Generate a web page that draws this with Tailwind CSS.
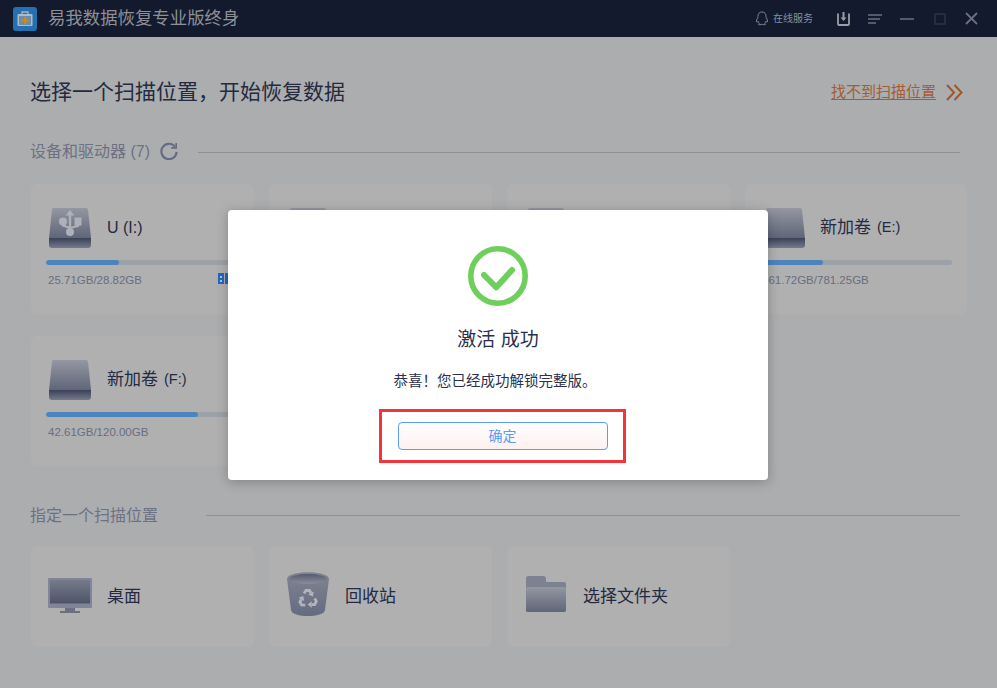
<!DOCTYPE html>
<html lang="zh-CN">
<head>
  <meta charset="UTF-8" />
  <meta name="viewport" content="width=device-width, initial-scale=1.0" />
  <title>易我数据恢复专业版终身</title>
  <script src="https://cdn.jsdelivr.net/npm/@tailwindcss/browser@4"></script>
</head>
<body class="relative w-[997px] h-[688px] overflow-hidden bg-[#acadaf] font-['Liberation_Sans','Noto_Sans_CJK_SC',sans-serif]">

  <svg width="0" height="0" class="absolute">
    <defs>
      <linearGradient id="driveTop" x1="0" y1="0" x2="0" y2="1">
        <stop offset="0" stop-color="#9497a1" />
        <stop offset="1" stop-color="#5f6679" />
      </linearGradient>
      <linearGradient id="driveBottom" x1="0" y1="0" x2="0" y2="1">
        <stop offset="0" stop-color="#3a4158" />
        <stop offset="1" stop-color="#757b8c" />
      </linearGradient>
      <linearGradient id="screen" x1="0" y1="0" x2="0" y2="1">
        <stop offset="0" stop-color="#767b8a" />
        <stop offset="1" stop-color="#4e5468" />
      </linearGradient>
      <linearGradient id="binBody" x1="0" y1="0" x2="0" y2="1">
        <stop offset="0" stop-color="#7f8492" />
        <stop offset="1" stop-color="#666c80" />
      </linearGradient>
      <linearGradient id="binInner" x1="0" y1="0" x2="0" y2="1">
        <stop offset="0" stop-color="#555b6f" />
        <stop offset="1" stop-color="#8b8f9c" />
      </linearGradient>
    </defs>
  </svg>

  <!-- Title bar -->
  <header class="h-[37px] bg-[#141a2e] flex items-center pl-[13px] pr-[19px]">
    <svg width="24" height="24" viewBox="0 0 24 24">
      <rect width="24" height="24" rx="3" fill="#2470b0" />
      <path d="M9 7V5h6v2" fill="none" stroke="#9fb6c8" stroke-width="1.3" />
      <rect x="4.5" y="7" width="15" height="12" rx="1" fill="#a9bccb" />
      <rect x="6" y="9" width="12" height="9" fill="#6f8ca2" />
      <path d="M12 10v7M8.500 13.500h7" stroke="#d08c12" stroke-width="2" />
    </svg>
    <span class="ml-[11px] text-[17.400px] text-[#8e9098]">易我数据恢复专业版终身</span>
    <div class="ml-auto flex items-center">
      <svg width="14" height="17" viewBox="0 0 16 18" fill="none" stroke="#8b919f" stroke-width="1">
        <path d="M8 1.500c-3 0-4.600 2.300-4.600 5 0 1-.2 1.700-1 3-1 1.700-1 3.500-.2 3.700.5.100 1-.6 1.300-1 .3 1.200 1 2 1.500 2.400-.8.300-1.300.8-.9 1.200.5.500 2.700.4 3.900-.3 1.200.7 3.400.8 3.900.3.400-.4-.1-.9-.9-1.200.5-.4 1.200-1.200 1.500-2.400.3.400.8 1.100 1.300 1 .8-.2.8-2-.2-3.700-.8-1.300-1-2-1-3 0-2.700-1.600-5-4.600-5z" />
      </svg>
      <span class="ml-[4px] text-[10px] text-[#7f93a8]">在线服务</span>
      <svg class="ml-[24px]" width="13" height="14" viewBox="0 0 13 14" fill="none">
        <path d="M1 1.500V12a1 1 0 0 0 1 1h9a1 1 0 0 0 1-1V1.500" stroke="#9a9ea8" stroke-width="1.800" />
        <path d="M6.500 0v6.500" stroke="#9a9ea8" stroke-width="2" />
        <path d="M3.500 5.500h6L6.500 9z" fill="#9a9ea8" />
      </svg>
      <svg class="ml-[18px]" width="14" height="12" viewBox="0 0 14 12" fill="none" stroke="#6b7080" stroke-width="1.500">
        <path d="M0 2h14M0 6h12M0 10h8" />
      </svg>
      <svg class="ml-[18px]" width="14" height="12" viewBox="0 0 14 12" stroke="#6b7080" stroke-width="1.500">
        <path d="M0 6h14" />
      </svg>
      <svg class="ml-[20px]" width="12" height="12" viewBox="0 0 12 12" fill="none" stroke="#2c3245" stroke-width="1.500">
        <rect x="1" y="1" width="10" height="10" />
      </svg>
      <svg class="ml-[19px]" width="13" height="13" viewBox="0 0 13 13" stroke="#6b7080" stroke-width="1.800">
        <path d="M1 1l11 11M12 1L1 12" />
      </svg>
    </div>
  </header>

  <main class="pl-[31px] pr-[30px]">
    <!-- Heading -->
    <div class="h-[36px] mt-[37px] flex items-center">
      <h1 class="-ml-px text-[21px] font-normal text-[#242a40]">选择一个扫描位置，开始恢复数据</h1>
      <a href="#" class="ml-auto text-[15px] text-[#a35c35] underline underline-offset-2">找不到扫描位置</a>
      <svg class="ml-[10px] mr-[4px]" width="17" height="17" viewBox="0 0 17 17" fill="none" stroke="#a0562d" stroke-width="2">
        <path d="M1 1l7 7.500-7 7.500M8.500 1l7 7.500-7 7.500" />
      </svg>
    </div>

    <!-- Devices -->
    <div class="mt-[30px] h-[22px] flex items-center">
      <span class="-ml-px mt-[2px] text-[16px] text-[#6d7184]">设备和驱动器 (7)</span>
      <svg class="ml-[10px]" width="18" height="18" viewBox="0 0 20 20" fill="none" stroke="#656c82" stroke-width="2.400">
        <path d="M16.500 5A8.500 8.500 0 1 0 18.500 11" />
        <path d="M18 1v5.500h-5.500" stroke-width="1.800" />
      </svg>
      <div class="ml-[20px] mr-[7px] mt-[2px] flex-1 h-px bg-[#8e9096]"></div>
    </div>

    <div class="mt-[22px] grid grid-cols-[223px_223px_223px_222px] gap-x-[15px] gap-y-[22px]">
      <!-- U (I:) -->
      <section class="h-[130px] bg-[#b0b0b0] rounded-[6px] px-[15px] pt-[24px]">
        <div class="flex items-center h-[40px]">
          <svg class="ml-[3px]" width="42" height="40" viewBox="0 0 42 40">
            <path d="M5 0h32a2 2 0 0 1 2 2l3 28H0L3 2a2 2 0 0 1 2-2z" fill="url(#driveTop)" />
            <path d="M0 30h42v7a3 3 0 0 1-3 3H3a3 3 0 0 1-3-3z" fill="url(#driveBottom)" />
            <g fill="#aeb1b9" stroke="#aeb1b9">
              <path d="M21 6v17" stroke-width="2.400" fill="none" />
              <path d="M16.500 7.500h9L21 2z" stroke="none" />
              <circle cx="21" cy="24" r="4" stroke="none" />
              <circle cx="14" cy="13.500" r="4" stroke="none" />
              <rect x="25.500" y="9.500" width="7" height="8" stroke="none" />
              <path d="M14 16v1.500l7 2.500M29 17v1l-8 2" fill="none" stroke-width="2.200" />
            </g>
          </svg>
          <span class="ml-[16px] text-[16px] text-[#232a42]">U (I:)</span>
        </div>
        <div class="mt-[12px] h-[5px] rounded-full bg-[#9da1a8] overflow-hidden">
          <div class="h-full rounded-full bg-[#4d84bd]" style="width: 38%"></div>
        </div>
        <p class="mt-[7px] ml-[2px] text-[11.500px] leading-[16px] text-[#686e82]">25.71GB/28.82GB</p>
      </section>

      <!-- Mostly hidden behind dialog -->
      <section class="h-[130px] bg-[#b0b0b0] rounded-[6px] px-[15px] pt-[24px]">
        <svg class="ml-[3px]" width="42" height="40" viewBox="0 0 42 40">
          <path d="M5 0h32a2 2 0 0 1 2 2l3 38H0L3 2a2 2 0 0 1 2-2z" fill="url(#driveTop)" />
        </svg>
      </section>
      <section class="h-[130px] bg-[#b0b0b0] rounded-[6px] px-[15px] pt-[24px]">
        <svg class="ml-[3px]" width="42" height="40" viewBox="0 0 42 40">
          <path d="M5 0h32a2 2 0 0 1 2 2l3 38H0L3 2a2 2 0 0 1 2-2z" fill="url(#driveTop)" />
        </svg>
      </section>

      <!-- E: -->
      <section class="h-[130px] bg-[#b0b0b0] rounded-[6px] px-[15px] pt-[24px]">
        <div class="flex items-center h-[40px]">
          <svg class="ml-[3px]" width="42" height="40" viewBox="0 0 42 40">
            <path d="M5 0h32a2 2 0 0 1 2 2l3 28H0L3 2a2 2 0 0 1 2-2z" fill="url(#driveTop)" />
            <path d="M0 30h42v7a3 3 0 0 1-3 3H3a3 3 0 0 1-3-3z" fill="url(#driveBottom)" />
          </svg>
          <span class="ml-[15px] text-[17px] text-[#232a42]">新加卷</span>
          <span class="ml-[6px] text-[14.500px] text-[#232a42]">(E:)</span>
        </div>
        <div class="mt-[12px] h-[5px] rounded-full bg-[#9da1a8] overflow-hidden">
          <div class="h-full rounded-full bg-[#4d84bd]" style="width: 33%"></div>
        </div>
        <p class="mt-[7px] ml-[2px] text-[11.500px] leading-[16px] text-[#686e82]">361.72GB/781.25GB</p>
      </section>

      <!-- F: -->
      <section class="h-[130px] bg-[#b0b0b0] rounded-[6px] px-[15px] pt-[24px]">
        <div class="flex items-center h-[40px]">
          <svg class="ml-[3px]" width="42" height="40" viewBox="0 0 42 40">
            <path d="M5 0h32a2 2 0 0 1 2 2l3 28H0L3 2a2 2 0 0 1 2-2z" fill="url(#driveTop)" />
            <path d="M0 30h42v7a3 3 0 0 1-3 3H3a3 3 0 0 1-3-3z" fill="url(#driveBottom)" />
          </svg>
          <span class="ml-[16px] text-[17px] text-[#232a42]">新加卷</span>
          <span class="ml-[6px] text-[14.500px] text-[#232a42]">(F:)</span>
        </div>
        <div class="mt-[12px] h-[5px] rounded-full bg-[#9da1a8] overflow-hidden">
          <div class="h-full rounded-full bg-[#4d84bd]" style="width: 79%"></div>
        </div>
        <p class="mt-[7px] ml-[2px] text-[11.500px] leading-[16px] text-[#686e82]">42.61GB/120.00GB</p>
      </section>
    </div>

    <!-- Specific location -->
    <div class="mt-[38px] h-[22px] flex items-center">
      <span class="-ml-px mt-[2px] text-[16px] text-[#6d7184]">指定一个扫描位置</span>
      <div class="ml-[48px] mr-[7px] flex-1 h-px bg-[#8e9096]"></div>
    </div>

    <div class="mt-[20px] grid grid-cols-[223px_223px_223px] gap-x-[15px]">
      <section class="h-[101px] bg-[#b0b0b0] rounded-[6px] pl-[17px] flex items-center">
        <svg class="-mt-[3px]" width="44" height="35" viewBox="0 0 44 35">
          <rect width="44" height="30" rx="1" fill="#80869a" />
          <rect x="2" y="2" width="40" height="23.500" fill="url(#screen)" />
          <rect x="17" y="30" width="10" height="3" fill="#6a6f82" />
          <rect x="12" y="33" width="20" height="2" fill="#6a6f82" />
        </svg>
        <span class="ml-[15px] text-[17px] text-[#232a42]">桌面</span>
      </section>
      <section class="h-[101px] bg-[#b0b0b0] rounded-[6px] pl-[18px] flex items-center">
        <svg class="-mt-[5px]" width="42" height="44" viewBox="0 0 42 44">
          <path d="M0 7c0-9 42-9 42 0l-4 31c-1 8-33 8-34 0z" fill="url(#binBody)" />
          <ellipse cx="21" cy="7" rx="18.500" ry="5" fill="url(#binInner)" />
          <!-- recycle arrows, one arm rotated three times -->
          <g fill="#b3b5bc">
            <g>
              <path d="M17 21.500l2-3h3.500l1.500 2.500" fill="none" stroke="#b3b5bc" stroke-width="2.800" />
              <path d="M26.800 19.400l-5.600 3.200 4.800 1.900z" />
            </g>
            <g transform="rotate(120 21 27)">
              <path d="M17 21.500l2-3h3.500l1.500 2.500" fill="none" stroke="#b3b5bc" stroke-width="2.800" />
              <path d="M26.800 19.400l-5.600 3.200 4.800 1.900z" />
            </g>
            <g transform="rotate(240 21 27)">
              <path d="M17 21.500l2-3h3.500l1.500 2.500" fill="none" stroke="#b3b5bc" stroke-width="2.800" />
              <path d="M26.800 19.400l-5.600 3.200 4.800 1.900z" />
            </g>
          </g>
        </svg>
        <span class="ml-[16px] text-[17px] text-[#232a42]">回收站</span>
      </section>
      <section class="h-[101px] bg-[#b0b0b0] rounded-[6px] pl-[19px] flex items-center">
        <svg class="-mt-[6px]" width="40" height="36" viewBox="0 0 40 36">
          <path d="M2 0h15a3 3 0 0 1 3 3v3h18a2 2 0 0 1 2 2v26a2 2 0 0 1-2 2H2a2 2 0 0 1-2-2V2a2 2 0 0 1 2-2z" fill="#7d8291" />
          <path d="M2 11h36a2 2 0 0 1 2 2v21a2 2 0 0 1-2 2H2a2 2 0 0 1-2-2V13a2 2 0 0 1 2-2z" fill="url(#driveTop)" />
        </svg>
        <span class="ml-[17px] text-[17px] text-[#232a42]">选择文件夹</span>
      </section>
    </div>
  </main>

  <!-- Blue tag peeking out beside the dialog -->
  <div class="absolute left-[218px] top-[273px] w-[10px] h-[11px] flex gap-px">
    <div class="w-[6px] bg-[#2468c0] flex flex-col items-center justify-center gap-[2px]">
      <div class="w-[2px] h-[2px] bg-[#a9c6e8]"></div>
      <div class="w-[2px] h-[2px] bg-[#a9c6e8]"></div>
    </div>
    <div class="w-[3px] bg-[#2468c0]"></div>
  </div>

  <!-- Success dialog -->
  <div class="absolute left-[228px] top-[210px] w-[540px] h-[270px] bg-white rounded-[4px] shadow-[0_2px_12px_rgba(0,0,0,0.25)] flex flex-col items-center">
    <svg class="mt-[36px]" width="60" height="60" viewBox="0 0 60 60" fill="none">
      <circle cx="30" cy="30" r="27.200" stroke="#6fcf5c" stroke-width="5.600" />
      <path d="M16 29l12.300 12.300L44 24" stroke="#6fcf5c" stroke-width="6" stroke-linecap="round" stroke-linejoin="round" />
    </svg>
    <h2 class="mt-[20px] text-[19px] leading-[28px] font-normal text-[#2a3150]">激活 成功</h2>
    <p class="mt-[17px] mr-[6px] text-[14.500px] leading-[20px] text-[#2a3150]">恭喜！您已经成功解锁完整版。</p>
    <div class="mt-[18px] ml-[9px] w-[247px] h-[54px] border-[3px] border-[#f5333a] flex items-center justify-center">
      <button class="w-[210px] h-[28px] rounded-[4px] border border-[#5b9cf5] bg-gradient-to-b from-white to-[#fdf0f0] text-[14px] text-[#5b9cf5]">确定</button>
    </div>
  </div>

</body>
</html>
